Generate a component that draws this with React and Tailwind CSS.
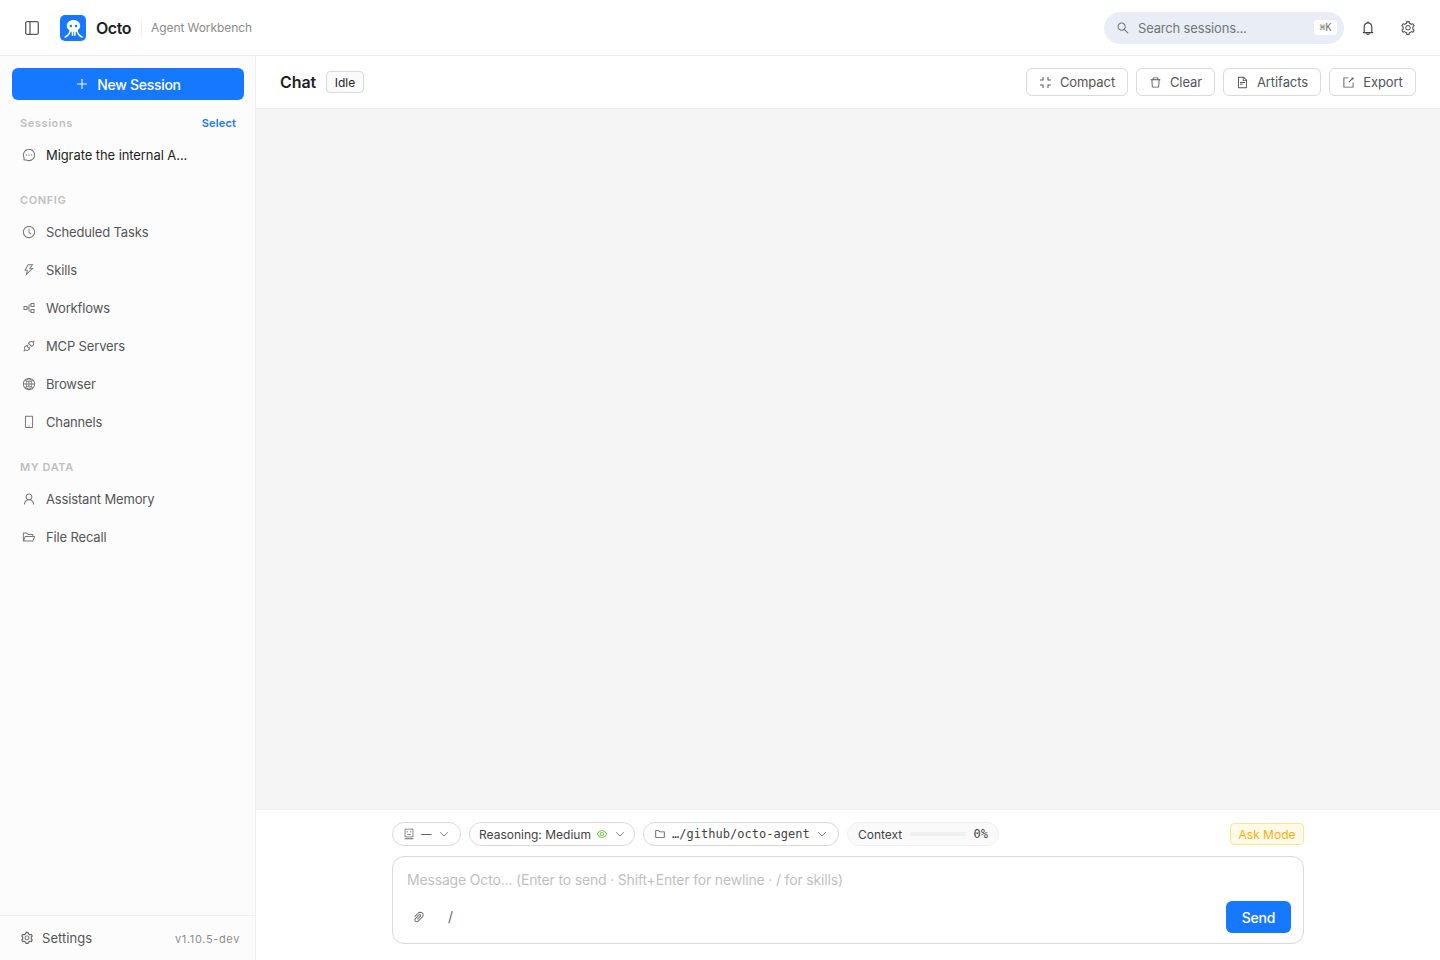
import {
  AiOutlineApi, AiOutlineBell, AiOutlineClockCircle, AiOutlineCompress, AiOutlineDelete,
  AiOutlineExport, AiOutlineEye, AiOutlineFileText, AiOutlineFolder, AiOutlineFolderOpen, AiOutlineGlobal,
  AiOutlineMessage, AiOutlineMobile, AiOutlinePaperClip, AiOutlinePartition, AiOutlinePlus, AiOutlineRobot,
  AiOutlineSearch, AiOutlineSetting, AiOutlineThunderbolt, AiOutlineUser,
} from 'react-icons/ai'

const config = [
  ['Scheduled Tasks', AiOutlineClockCircle],
  ['Skills', AiOutlineThunderbolt],
  ['Workflows', AiOutlinePartition],
  ['MCP Servers', AiOutlineApi],
  ['Browser', AiOutlineGlobal],
  ['Channels', AiOutlineMobile],
]

const data = [
  ['Assistant Memory', AiOutlineUser],
  ['File Recall', AiOutlineFolderOpen],
]

const actions = [
  ['Compact', AiOutlineCompress, 'w-[102px]'],
  ['Clear', AiOutlineDelete, 'w-[79px]'],
  ['Artifacts', AiOutlineFileText, 'w-[98px]'],
  ['Export', AiOutlineExport, 'w-[87px]'],
]

function Logo() {
  return (
    <svg className="size-[26px]" viewBox="0 0 26 26" fill="none">
      <rect width="26" height="26" rx="5" fill="#1677ff" />
      <path d="M13.500 4.900c-4 0-6.700 2.500-6.700 5.900 0 2.100 1 3.500 2.800 4.400l.6 1.500h6.600l.6-1.500c1.800-.9 2.800-2.300 2.800-4.400 0-3.400-2.700-5.900-6.700-5.900z" fill="#fff" />
      <path d="M10.200 15.600c-.5 2.600-2 5-5 6.300M12.500 16v4.200M14.900 16v4.200M17 15.600c.5 2.600 2 5 5 6.300" stroke="#fff" strokeWidth="1.600" strokeLinecap="round" />
      <circle cx="10.900" cy="11" r="1.250" fill="#1677ff" />
      <circle cx="16" cy="11" r="1.250" fill="#1677ff" />
    </svg>
  )
}

function PanelIcon() {
  return (
    <svg className="size-4" viewBox="0 0 16 16" fill="none" stroke="#595959" strokeWidth="1.300">
      <rect x="1.700" y="1.700" width="12.600" height="12.600" rx="1.500" />
      <path d="M6 1.700v12.600" />
    </svg>
  )
}

function Chevron({ className }) {
  return (
    <svg className={className} width="10" height="10" viewBox="0 0 10 10" fill="none" stroke="#777" strokeWidth="0.900">
      <path d="M1.200 3.200l3.800 3.800 3.800-3.800" />
    </svg>
  )
}

function NavItem({ label, Icon, active }) {
  return (
    <div className={active ? 'flex h-9 items-center gap-2.5 px-[10px] text-[#1f1f1f]' : 'flex h-9 items-center gap-2.5 px-[10px] text-[#555]'}>
      <Icon className="mb-0.5 size-[14px] shrink-0 text-[#777]" />
      <span className={active ? 'text-[13px] tracking-[-0.080px]' : 'text-[13px] tracking-[-0.150px]'}>{label}</span>
    </div>
  )
}

function Heading({ children }) {
  return <div className="flex h-4 items-center px-2 text-[11px] font-semibold tracking-[0.6px] text-[#bfbfbf]">{children}</div>
}

export default function App() {
  return (
    <div className="flex h-[960px] w-[1440px] flex-col overflow-hidden bg-white font-['Inter',sans-serif] text-[#1f1f1f]">
      <header className="flex h-14 shrink-0 items-center border-b border-[#ebebeb] pl-6 pr-6">
        <PanelIcon />
        <div className="ml-5"><Logo /></div>
        <span className="ml-2.5 text-base font-semibold tracking-[-0.450px]">Octo</span>
        <span className="ml-2.5 h-4 w-px bg-[#f0f0f0]" />
        <span className="ml-[9px] text-xs tracking-[-0.080px] text-[#8c8c8c]">Agent Workbench</span>
        <div className="ml-auto flex h-8 w-60 items-center rounded-full bg-[#e9edf6] pl-3 pr-[7px] text-[#757575]">
          <AiOutlineSearch className="size-[14px]" />
          <span className="ml-2 pt-0.5 text-[13px] tracking-[-0.170px]">Search sessions...</span>
          <span className="ml-auto flex h-[15px] w-[23px] items-center justify-center rounded-[3px] bg-white font-['DejaVu_Sans_Mono',monospace] text-[10px]">⌘K</span>
        </div>
        <AiOutlineBell className="ml-4 size-4 text-[#434343]" />
        <AiOutlineSetting className="ml-6 size-4 text-[#555]" />
      </header>
      <div className="flex min-h-0 flex-1">
        <aside className="flex w-64 shrink-0 flex-col border-r border-[#f0f0f0] bg-[#fcfcfc]">
          <div className="flex-1 pl-3 pr-[11px] pt-3">
            <div className="flex h-8 items-center justify-center gap-2 rounded-md bg-[#1677ff] text-sm font-medium text-white">
              <AiOutlinePlus className="size-[14px]" />
              <span className="pt-0.5 tracking-[-0.300px]">New Session</span>
            </div>
            <div className="mt-[15px] flex items-center justify-between pr-2">
              <Heading>Sessions</Heading>
              <span className="text-[11px] font-semibold tracking-[0.150px] text-[#1677ff]">Select</span>
            </div>
            <div className="mt-1.5"><NavItem label="Migrate the internal A..." Icon={AiOutlineMessage} active /></div>
            <div className="mt-[19px]"><Heading>CONFIG</Heading></div>
            <div className="mt-1.5 flex flex-col gap-0.5">
              {config.map(([label, Icon]) => <NavItem key={label} label={label} Icon={Icon} />)}
            </div>
            <div className="mt-[19px]"><Heading>MY DATA</Heading></div>
            <div className="mt-1.5 flex flex-col gap-0.5">
              {data.map(([label, Icon]) => <NavItem key={label} label={label} Icon={Icon} />)}
            </div>
          </div>
          <div className="flex h-[45px] items-center border-t border-[#f0f0f0] pl-5 pr-[15px] text-[#555]">
            <AiOutlineSetting className="size-[14px]" />
            <span className="ml-2 pt-0.5 text-[13px] tracking-[0.050px]">Settings</span>
            <span className="ml-auto pt-0.5 text-[11px] tracking-[0.650px] text-[#8c8c8c]">v1.10.5-dev</span>
          </div>
        </aside>
        <main className="flex min-w-0 flex-1 flex-col bg-[#f5f5f5]">
          <div className="flex h-[53px] shrink-0 items-center border-b border-[#f0f0f0] bg-white px-6">
            <h1 className="text-base font-semibold tracking-[-0.100px]">Chat</h1>
            <span className="ml-2.5 flex h-[22px] w-[38px] items-center justify-center rounded border border-[#d9d9d9] bg-[#fafafa] pt-0.5 text-xs">Idle</span>
            <div className="ml-auto flex gap-2">
              {actions.map(([label, Icon, width]) => (
                <div key={label} className={`flex h-7 items-center justify-center gap-2 rounded-md border border-[#d9d9d9] text-[13px] text-[#555] ${width}`}>
                  <Icon className="size-[13px]" />
                  <span className="pt-0.5 tracking-[-0.080px]">{label}</span>
                </div>
              ))}
            </div>
          </div>
          <div className="flex-1" />
          <div className="h-[151px] shrink-0 border-t border-[#f0f0f0] bg-white px-[136px] pt-3">
            <div className="flex h-6 items-center gap-2 text-xs text-[#434343]">
              <div className="flex h-6 w-[69px] items-center rounded-full border border-[#d9d9d9] px-2.5">
                <AiOutlineRobot className="size-3 text-[#666]" />
                <span className="ml-1.5 pt-0.5 text-[10.500px]">—</span>
                <Chevron className="ml-auto mr-px" />
              </div>
              <div className="flex h-6 w-[166px] items-center rounded-full border border-[#d9d9d9] pl-[9px] pr-[9px]">
                <span className="pt-0.5">Reasoning: Medium</span>
                <AiOutlineEye className="ml-auto size-3 text-[#52c41a]" />
                <Chevron className="ml-[7px]" />
              </div>
              <div className="flex h-6 w-[196px] items-center rounded-full border border-[#d9d9d9] px-2.5">
                <AiOutlineFolder className="size-3 text-[#555]" />
                <span className="ml-1.5 font-['DejaVu_Sans_Mono',monospace] text-xs tracking-[0.030px]">…/github/octo-agent</span>
                <Chevron className="ml-auto mr-px" />
              </div>
              <div className="flex h-6 w-[152px] items-center rounded-full border border-[#f0f0f0] bg-[#fafafa] px-2.5">
                <span className="pt-0.5">Context</span>
                <span className="ml-2 h-1 w-14 rounded-full bg-[#f0f0f0]" />
                <span className="ml-auto font-['DejaVu_Sans_Mono',monospace] text-xs">0%</span>
              </div>
              <span className="ml-auto flex h-[22px] w-[74px] items-center justify-center rounded border border-[#ffe58f] bg-[#fffbe6] pt-0.5 text-xs text-[#faad14]">Ask Mode</span>
            </div>
            <div className="mt-2.5 flex h-[88px] flex-col justify-between rounded-xl border border-[#d9d9d9] pb-2.5 pl-3.5 pr-3 pt-[13px]">
              <span className="text-sm tracking-[-0.170px] text-[#bfbfbf]">Message Octo... (Enter to send · Shift+Enter for newline · / for skills)</span>
              <div className="flex items-center text-[#666]">
                <AiOutlinePaperClip className="ml-[5px] size-[14px]" />
                <span className="ml-[22px] text-sm">/</span>
                <span className="ml-auto flex h-8 w-[65px] items-center justify-center rounded-md bg-[#1677ff] pt-0.5 text-sm font-medium tracking-[-0.200px] text-white">Send</span>
              </div>
            </div>
          </div>
        </main>
      </div>
    </div>
  )
}
